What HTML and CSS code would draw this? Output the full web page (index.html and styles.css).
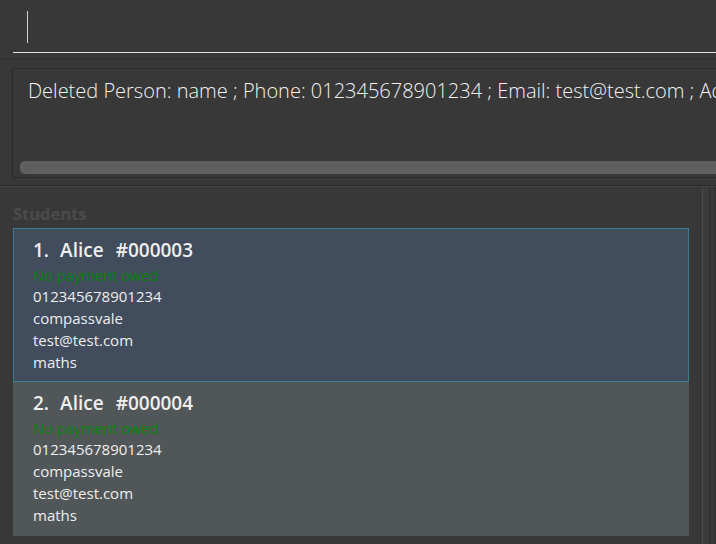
FILE: index.html
```html
<!DOCTYPE html>
<html>
<head>
<meta charset="utf-8">
<link rel="stylesheet" href="styles.css">
</head>
<body>
<div class="app">
  <div class="command">
    <div class="command-field"><span class="cursor"></span></div>
  </div>
  <div class="band"></div>
  <div class="result">
    <div class="result-box">
      <div class="result-text">Deleted Person: name ; Phone: 012345678901234 ; Email: test@test.com ; Address: compassvale ; Subject: maths</div>
      <div class="hscroll"><div class="thumb"></div></div>
    </div>
  </div>
  <div class="main">
    <div class="list-panel">
      <div class="label">Students</div>
      <div class="card selected">
        <div class="title"><span class="idx">1.</span><span class="name">Alice</span><span class="id">#000003</span></div>
        <div class="owed">No payment owed</div>
        <div class="line">012345678901234</div>
        <div class="line">compassvale</div>
        <div class="line">test@test.com</div>
        <div class="line">maths</div>
      </div>
      <div class="card">
        <div class="title"><span class="idx">2.</span><span class="name">Alice</span><span class="id">#000004</span></div>
        <div class="owed">No payment owed</div>
        <div class="line">012345678901234</div>
        <div class="line">compassvale</div>
        <div class="line">test@test.com</div>
        <div class="line">maths</div>
      </div>
    </div>
    <div class="splitter"></div>
    <div class="side"></div>
  </div>
</div>
</body>
</html>
```

FILE: styles.css
```css
html, body {
  margin: 0;
  padding: 0;
  background: #383838;
  overflow: hidden;
}
.app {
  width: 716px;
  height: 544px;
  display: flex;
  flex-direction: column;
  font-family: "Open Sans", "Noto Sans", sans-serif;
  overflow: hidden;
}
.command {
  height: 58px;
  padding: 0 0 0 13px;
  box-sizing: border-box;
}
.command-field {
  height: 53px;
  border-bottom: 1px solid #e4e4e4;
  padding: 11px 0 0 14px;
  box-sizing: border-box;
}
.cursor {
  display: block;
  width: 1px;
  height: 32px;
  background: #d0d0d0;
}
.band {
  height: 3px;
  background: #323232;
}
.result {
  padding: 7px 0 0 12px;
  height: 125px;
  box-sizing: border-box;
  border-bottom: 1px solid #2a2a2a;
  box-shadow: 0 1px 0 #424242;
}
.result-box {
  height: 110px;
  border: 1px solid #2b2b2b;
  border-right: none;
  box-sizing: border-box;
  display: flex;
  flex-direction: column;
  justify-content: space-between;
  padding: 0 0 3px 7px;
  overflow: hidden;
}
.result-text {
  color: #f2f2f2;
  font-size: 20px;
  font-weight: 300;
  white-space: nowrap;
  padding: 7px 0 0 8px;
  line-height: 30px;
}
.hscroll {
  height: 13px;
}
.thumb {
  height: 13px;
  width: 1200px;
  background: #5f5f5f;
  border-radius: 5px;
}
.main {
  flex: 1;
  display: flex;
  margin-top: 1px;
}
.list-panel {
  width: 703px;
  padding: 13px 13px 0 13px;
  box-sizing: border-box;
}
.label {
  color: #4b4b4b;
  font-weight: 700;
  font-size: 16.5px;
  line-height: 28px;
  height: 28px;
}
.card {
  background: #515658;
  padding: 6px 0 9px 19px;
  border: 1px solid transparent;
  border-top: none;
  color: #eeeeee;
}
.card.selected {
  background: #414c5d;
  border: 1px solid #3a7d93;
  padding-top: 6px;
  padding-bottom: 8px;
}
.title {
  font-size: 19px;
  font-weight: 600;
  line-height: 30px;
  white-space: nowrap;
}
.idx {
  margin-right: 11px;
}
.name {
  margin-right: 12px;
}
.owed {
  color: #0a820a;
  font-size: 15px;
  line-height: 20px;
  letter-spacing: -0.2px;
}
.line {
  font-size: 15px;
  line-height: 22px;
}
.splitter {
  width: 6px;
  border-left: 1px solid #4a4a4a;
  border-right: 1px solid #2d2d2d;
  background: #3b3b3b;
}
.side {
  flex: 1;
  border-left: 1px solid #2f2f2f;
  margin-left: 5px;
  background: #3a3a3a;
}
```
